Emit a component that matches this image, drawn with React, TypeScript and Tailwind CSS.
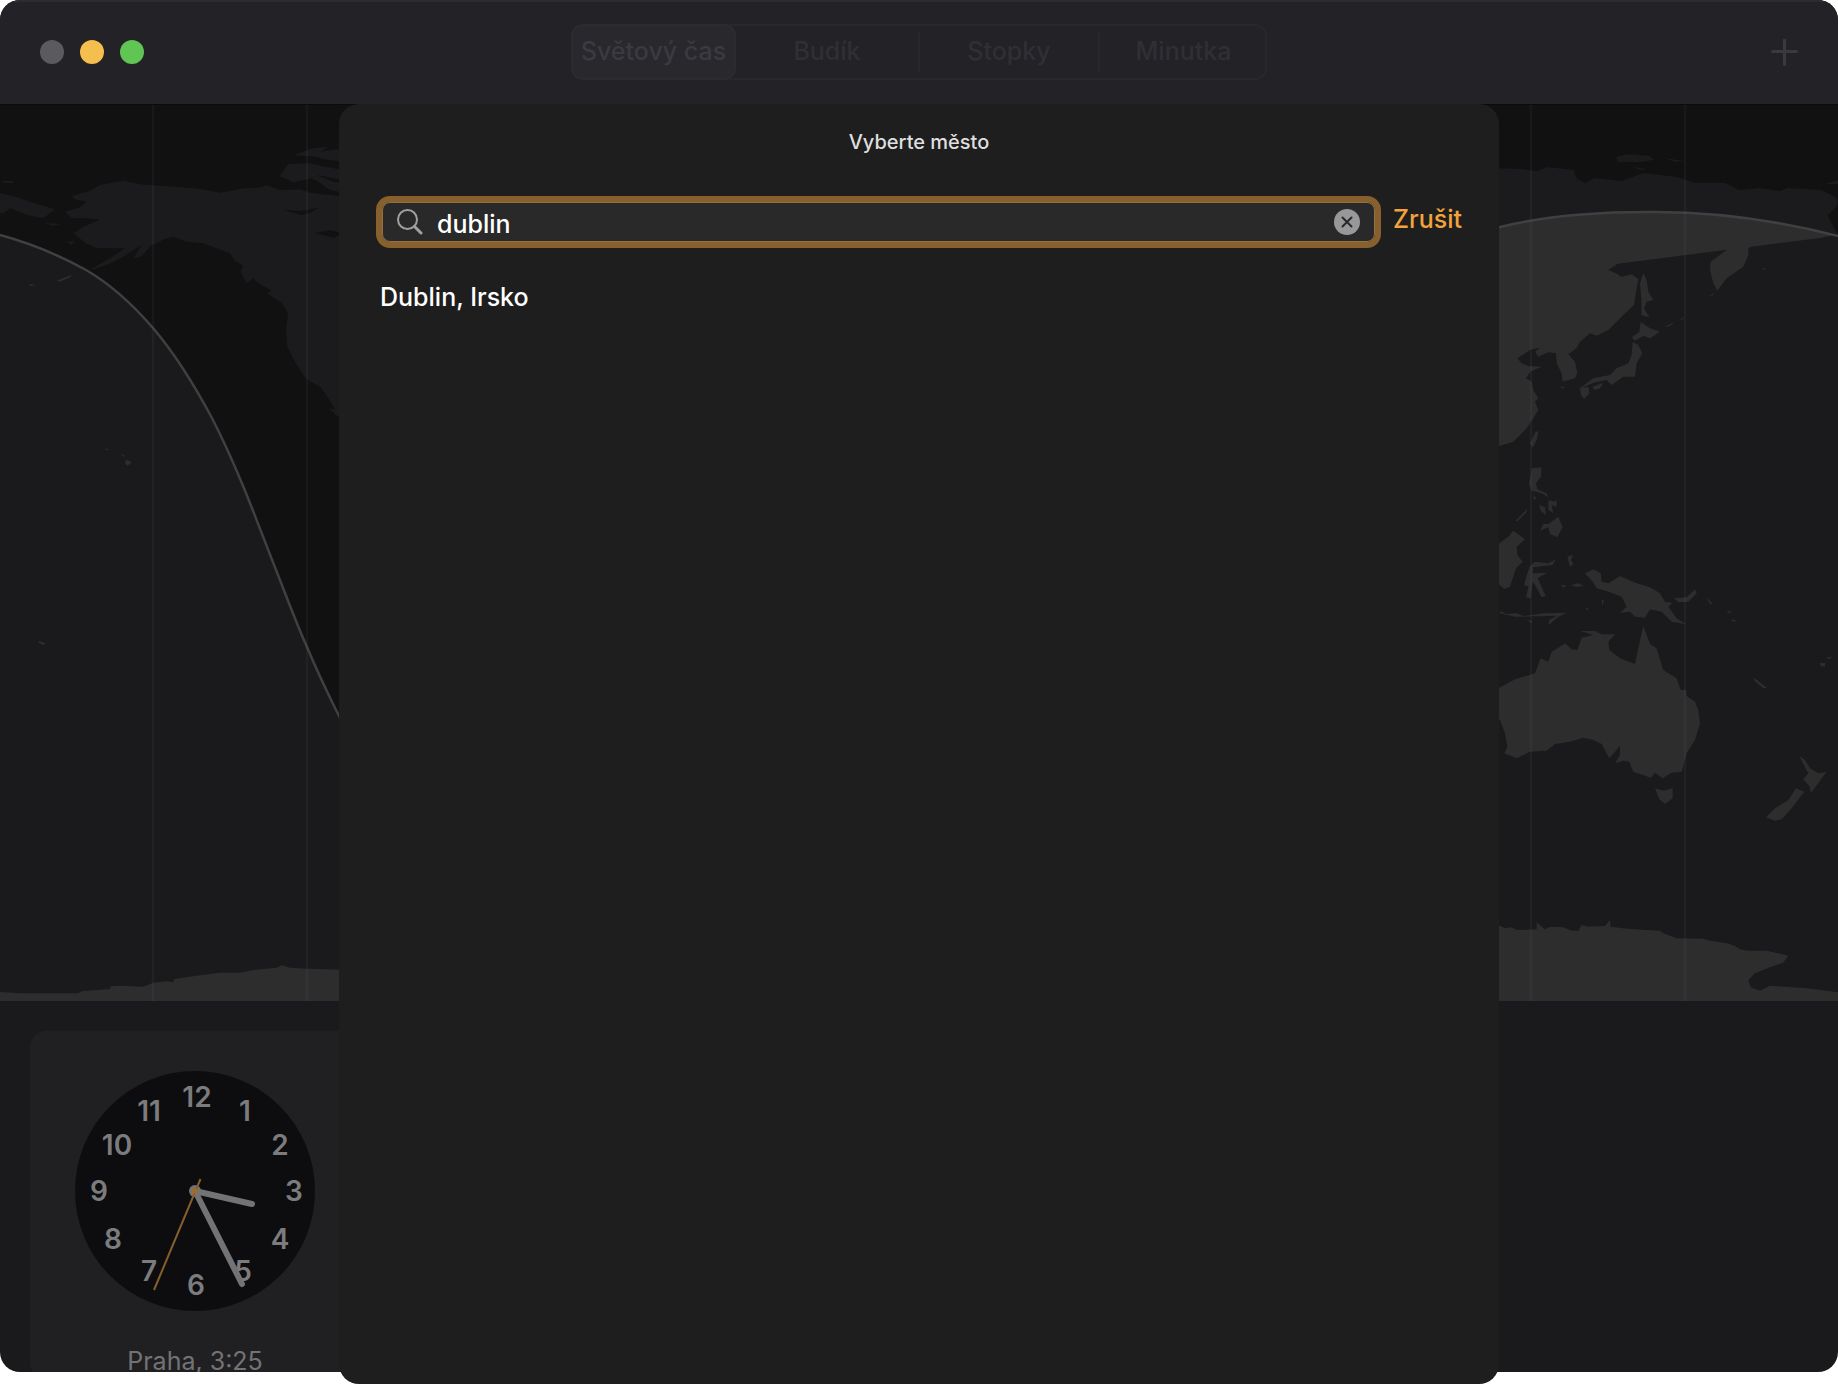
import React, { useState } from 'react';

const tabs = [
    { label: "Světový čas", width: "w-[165px]" },
    { label: "Budík", width: "w-[182px]" },
    { label: "Stopky", width: "w-[180px]" },
    { label: "Minutka", width: "w-[169px]" },
];

const cities = ["Dublin, Irsko"];

const numerals = [
    { n: 12, x: 122, y: 26 }, { n: 1, x: 170, y: 40 }, { n: 2, x: 205, y: 74 },
    { n: 3, x: 219, y: 120 }, { n: 4, x: 205, y: 168 }, { n: 5, x: 168, y: 200 },
    { n: 6, x: 121, y: 214 }, { n: 7, x: 74, y: 200 }, { n: 8, x: 38, y: 168 },
    { n: 9, x: 24, y: 120 }, { n: 10, x: 42, y: 74 }, { n: 11, x: 74, y: 40 },
];

const dayLine = "M0 235C33 244 59 255 86 270C112 285 134 306 153 328C176 355 195 386 213 420C240 473 259 527 278 575C289 603 297 625 307 647C317 671 328 694 340 718C400 830 520 960 730 965C1010 970 1120 700 1220 440C1290 300 1390 246 1500 227C1545 216 1595 212 1647 212C1713 211 1775 220 1838 236";

const TitleBar: React.FC = () => {
    const [activeTab, setActiveTab] = useState(0);

    return (
        <header className="grid h-[104px] shrink-0 grid-cols-[1fr_auto_1fr] items-center bg-[#232227] px-10 inset-shadow-[0_2px_0_#2c2c31]">
            <div className="flex gap-4">
                <button aria-label="Zavřít" className="size-6 rounded-full bg-[#5b5a5f]" />
                <button aria-label="Minimalizovat" className="size-6 rounded-full bg-[#f5bf4f]" />
                <button aria-label="Zvětšit" className="size-6 rounded-full bg-[#61c554]" />
            </div>

            {/* Sections */}
            <nav className="flex h-14 items-center rounded-xl text-[25px] font-medium text-[#302f34] ring-2 ring-[#28272c] ring-inset">
                {tabs.map((tab, index) => (
                    <button
                        key={tab.label}
                        onClick={() => setActiveTab(index)}
                        className={`${tab.width} ${index === activeTab
                            ? "h-14 rounded-xl border-2 border-[#2b2b30] bg-[#28282d] text-[#3b3a40]"
                            : index > 1 ? "h-10 border-l-2 border-[#28272c]" : "h-10"}`}
                    >
                        {tab.label}
                    </button>
                ))}
            </nav>

            <button aria-label="Přidat" className="justify-self-end">
                <svg className="block size-[27px]" viewBox="0 0 27 27" fill="none" stroke="#3a393e" strokeWidth="3" strokeLinecap="round">
                    <path d="M13.5 0v25.500M1.500 12.500h24" />
                </svg>
            </button>
        </header>
    );
};

const Land: React.FC = () => (
    <>
        {/* North America and Pacific islands */}
        <g transform="scale(.33333)">
            <path d="M215 588L270 572L300 555L370 542L420 553L520 560L600 566L660 578L730 565L775 564L800 556L840 570L900 568L930 578L960 582L1060 592V1300L1020 1255L985 1225L1005 1228L985 1195L965 1165L920 1137L900 1110L885 1085L862 1040L858 990L864 940L845 908L800 880L815 872L775 850L760 835L740 850L722 815L730 798L705 782L690 760L650 745L610 730L560 725L520 710L490 718L480 725L455 735L420 772L400 775L425 735L370 770L320 795L265 812L330 775L375 745L340 745L290 745L255 728L220 700L250 680L300 660L260 655L215 655L195 635L240 622L260 605L225 598Z" />
            <path d="M0 580L50 592L100 608L165 628L130 655L80 645L30 625L10 640L0 640ZM5 542L40 543L38 550L10 548ZM130 668L180 672L160 678ZM200 725L225 722L215 735Z" />
            <path d="M880 465L940 445L985 440L960 455L1030 445V485L970 478L950 470L910 468ZM1000 432L1030 430V436ZM838 528L865 492L930 490L975 500L1030 510V540L950 525L1000 545L1030 548V578L990 570L960 548L935 535L910 540L880 547Z" />
            <path d="M170 842L215 824L210 832L180 845ZM35 859L60 860ZM88 852L108 855L90 858Z" />
            <path d="M376 1379L388 1382L395 1388L383 1397L376 1392ZM362 1360L375 1368L370 1370ZM316 1345L326 1348L320 1352ZM115 1922L136 1930L132 1935L118 1930Z" />
            <path d="M0 2976L60 2980H235L245 2974L330 2967L332 2959L365 2957L430 2960L460 2948L500 2944L520 2947L522 2937L600 2926L660 2918L720 2918L760 2910L830 2903L845 2896L870 2903L920 2906L1060 2910V3020H0Z" />
        </g>

        {/* Siberia and east Asia */}
        <path d="M1490 168L1520 169L1537 171L1547 167L1574 170L1576 178L1585 183L1595 178L1622 181L1643 173L1677 177L1695 183L1725 183L1739 190L1760 188L1780 191L1787 188L1821 190L1835 197L1838 200L1837 206L1825 218L1832 226L1838 234L1820 238L1490 280Z" />
        <path d="M1616 157L1628 154L1650 156L1654 160L1640 162L1618 162ZM1664 158L1684 161L1675 162ZM1631 166L1647 169L1640 170ZM1825 184L1838 180V184Z" />
        <g transform="translate(1480 180) scale(.33333)">
            <path d="M20 90H1035L1074 167L1020 160L985 150L950 170L915 187L880 180L830 188L805 205L805 225L790 260L740 295L712 332L700 310L690 270L692 245L720 225L760 195L800 172L830 150L815 145L775 175L755 175L762 158L725 157L690 180L675 195L660 205L625 200L610 193L540 200L490 198L450 225L415 250L385 270L405 278L425 290L455 283L475 298L470 325L462 375L430 405L385 450L350 467L330 460L300 485L290 505L265 522L285 545L292 580L285 595L248 605L245 580L230 550L228 520L205 517L175 530L165 515L180 503L150 510L112 535L125 550L145 558L185 560L150 575L138 595L155 605L160 630L175 655L165 665L175 690L160 715L140 745L100 785L60 797H20Z" />
            <path d="M490 280L500 300L505 335L520 360L500 365L492 385L508 412L485 405L484 360L480 310Z" />
            <path d="M482 425L510 445L540 455L510 475L490 468L465 482L455 472L478 455Z" />
            <path d="M458 485L475 495L487 520L470 550L465 590L430 590L395 615L380 600L345 607L295 628L340 595L390 585L410 565L445 550L455 525Z" />
            <path d="M300 625L325 620L328 640L312 658L303 645ZM338 620L370 608L360 625L342 630ZM165 758L176 752L170 780L158 803L150 790ZM685 348L705 338L698 346ZM555 440L585 425L570 438ZM595 420L615 410L608 418ZM845 266L856 264L856 271ZM242 620L254 620L248 627Z" />
        </g>

        {/* South-east Asia, Australia, New Zealand */}
        <g transform="translate(1480 440) scale(.33333)">
            <path d="M155 85L185 82L183 110L168 130L172 148L200 160L205 172L185 160L155 152L147 130L152 105ZM160 165L170 175L162 180ZM178 195L195 202L198 225L182 212ZM205 180L222 185L230 180L230 200L215 195L220 220L205 210ZM205 252L235 230L248 262L232 292L210 282L205 262L180 272L190 252ZM106 243L142 206L138 218L112 243Z" />
            <path d="M20 330L60 308L85 290L100 272L135 298L110 320L112 345L128 365L108 385L90 440L72 447L60 435L20 420Z" />
            <path d="M150 378L165 365L205 370L228 358L218 375L190 378L160 382L158 400L203 398L173 414L197 468L185 472L168 440L158 425L152 475L138 472L145 440L132 435L142 400ZM262 350L280 344L273 360L280 372L270 380ZM242 435L258 436L252 444ZM270 436L295 430L312 438L290 440ZM365 478L372 482L367 496ZM318 505L326 502L322 512ZM213 410L232 413ZM375 398L395 404ZM318 388L330 392Z" />
            <path d="M60 513L80 522L110 520L130 528L190 520L260 518L235 530L205 556L208 540L230 527L180 529L105 530L60 520ZM138 540L156 542L158 550Z" />
            <path d="M315 400L340 388L362 400L365 425L385 430L420 408L470 430L510 442L540 460L555 485L578 488L565 500L590 535L618 553L575 545L545 515L510 508L495 533L465 530L450 515L420 518L440 500L425 470L385 455L350 445L338 425ZM582 475L620 472L645 448L650 460L625 485L595 487ZM678 470L698 492L690 492ZM710 492L725 505ZM740 510L758 520L745 518ZM752 536L770 542L760 546ZM765 525L780 535ZM858 628L866 635ZM870 640L880 652ZM820 712L862 745L850 744L826 725ZM1020 668L1036 670L1034 680L1022 678ZM1040 652L1058 650L1046 658Z" />
            <path d="M40 750L60 742L105 718L165 700L182 655L205 665L215 635L255 610L275 628L292 630L305 593L340 585L300 573L345 573L365 583L405 583L385 605L388 630L420 655L465 672L478 610L490 558L510 612L530 625L550 690L590 715L602 750L618 750L620 768L645 785L655 810L660 850L645 900L620 940L605 995L575 998L548 1015L525 998L512 1013L460 995L448 965L430 962L405 970L420 945L420 918L388 955L365 912L340 900L310 893L270 905L225 912L200 932L150 935L110 955L73 940L82 920L75 880L60 840L40 830Z" />
            <path d="M525 1045L552 1052L578 1044L578 1075L555 1092L538 1078ZM958 948L975 960L990 985L1015 1000L1040 995L1018 1025L993 1058L988 1038L970 1018L985 1000L968 968ZM948 1045L973 1055L935 1105L905 1138L885 1142L858 1132L885 1105L925 1080Z" />
        </g>

        {/* Antarctica */}
        <g transform="translate(1480 840) scale(.33333)">
            <path d="M20 250L60 257L75 265L95 262L110 270L170 268V247L195 268L210 260L250 262L275 272L295 272L305 255L325 260L375 258L390 240L392 260L440 266L540 272L550 280L590 295L670 296L690 302L740 310L765 318L780 328L805 332L860 332L925 347L910 368L870 382L825 400L805 420L812 442L840 452L870 437L980 445L1074 457V500H20Z" />
        </g>
    </>
);

const WorldMap: React.FC = () => (
    <svg className="block w-full shrink-0" viewBox="0 104 1838 897" aria-hidden="true">
        <defs>
            <clipPath id="daylight">
                <path d={`${dayLine}V1001H0Z`} />
            </clipPath>
        </defs>
        <rect y="104" width="1838" height="897" fill="#111112" />
        <g fill="#1b1b1d">
            <Land />
        </g>
        <path d="M283 210L300 211L318 208L310 213L302 215ZM315 233L330 230L342 233L334 238Z" fill="#111112" />
        <g clipPath="url(#daylight)">
            <rect y="104" width="1838" height="897" fill="#1a1a1c" />
            <g fill="#2d2d2e">
                <Land />
            </g>
        </g>
        <path d={dayLine} fill="none" stroke="#404042" strokeWidth="2.500" />
        <path d="M153 104v897M307 104v897M1531 104v897M1685 104v897" stroke="#8c8ca0" strokeOpacity=".07" strokeWidth="2.500" />
        <path d="M0 104.500H1838" stroke="#0b0b0c" />
    </svg>
);

const CityClock: React.FC = () => (
    <div className="flex w-[330px] shrink-0 flex-col items-center rounded-2xl bg-[#202022] pt-10">
        <svg className="size-60" viewBox="0 0 240 240" aria-hidden="true">
            <circle cx="120" cy="120" r="120" fill="#0d0d0f" />
            <g fill="#7c7c7e" fontSize="28" fontWeight="600" textAnchor="middle">
                {numerals.map(({ n, x, y }) => (
                    <text key={n} x={x} y={y + 10}>{n}</text>
                ))}
            </g>
            <g stroke="#737376" strokeWidth="6" strokeLinecap="round">
                <path d="M120 120L177 133" />
                <path d="M120 120L167 213" />
            </g>
            <circle cx="120" cy="120" r="6" fill="#737376" />
            <path d="M125.500 108L79 219" stroke="#875f2b" strokeWidth="2" />
            <circle cx="120" cy="120" r="3" fill="#9c6c2c" />
        </svg>
        <p className="mt-8 text-[25px] leading-9 text-[#737376]">Praha, 3:25</p>
    </div>
);

const CityDialog: React.FC = () => {
    const [query, setQuery] = useState("dublin");
    const results = cities.filter((city) => city.toLowerCase().includes(query.toLowerCase()));

    return (
        <section
            role="dialog"
            aria-labelledby="dialog-title"
            className="w-[1160px] max-w-full rounded-[20px] bg-[#1e1e1e] px-[37px] pt-6"
        >
            <h1 id="dialog-title" className="text-center text-[20px] leading-7 font-medium text-[#dfdfdf]">
                Vyberte město
            </h1>

            {/* Search */}
            <div className="mt-10 flex items-start gap-3">
                <div className="flex h-[52px] flex-1 items-center rounded-[14px] border-6 border-[#87602d] bg-[#292929] px-[15px] ring-1 ring-[#917045] ring-inset">
                    <svg className="size-[26px] shrink-0" viewBox="0 0 26 26" fill="none" stroke="#a0a0a0" aria-hidden="true">
                        <circle cx="10.500" cy="10.500" r="9.500" strokeWidth="2" />
                        <path d="M17.500 17.500L24 24" strokeWidth="3" strokeLinecap="round" />
                    </svg>
                    <input
                        type="text"
                        aria-label="Hledat město"
                        value={query}
                        onChange={(e) => setQuery(e.target.value)}
                        className="ml-[14px] min-w-0 flex-1 bg-transparent pt-1 text-[25px] leading-8 font-medium text-white outline-none"
                    />
                    <button aria-label="Vymazat" onClick={() => setQuery("")}>
                        <svg className="block size-[26px]" viewBox="0 0 26 26">
                            <circle cx="13" cy="13" r="13" fill="#98989a" />
                            <path d="M8.500 8.500l9 9M17.500 8.500l-9 9" stroke="#292929" strokeWidth="2" strokeLinecap="round" />
                        </svg>
                    </button>
                </div>
                <button className="text-[25px] leading-[46px] font-medium text-[#f2a33c]">Zrušit</button>
            </div>

            {/* Results */}
            <ul className="mt-8 text-[25px] leading-[34px] font-medium text-white">
                {results.map((city) => (
                    <li key={city}>
                        <button className="w-full px-1 text-left">{city}</button>
                    </li>
                ))}
            </ul>
        </section>
    );
};

const App: React.FC = () => {
    return (
        <div className="relative h-screen bg-white pb-3 font-['Inter',sans-serif]">
            <main className="flex h-full flex-col overflow-hidden rounded-[20px] bg-[#1a1a1c]">
                <TitleBar />
                <WorldMap />
                <div className="flex min-h-0 flex-1 items-start overflow-hidden p-[30px] pb-0">
                    <CityClock />
                </div>
            </main>

            <div className="absolute inset-x-0 top-[104px] bottom-0 flex justify-center">
                <CityDialog />
            </div>
        </div>
    );
};

export default App;
